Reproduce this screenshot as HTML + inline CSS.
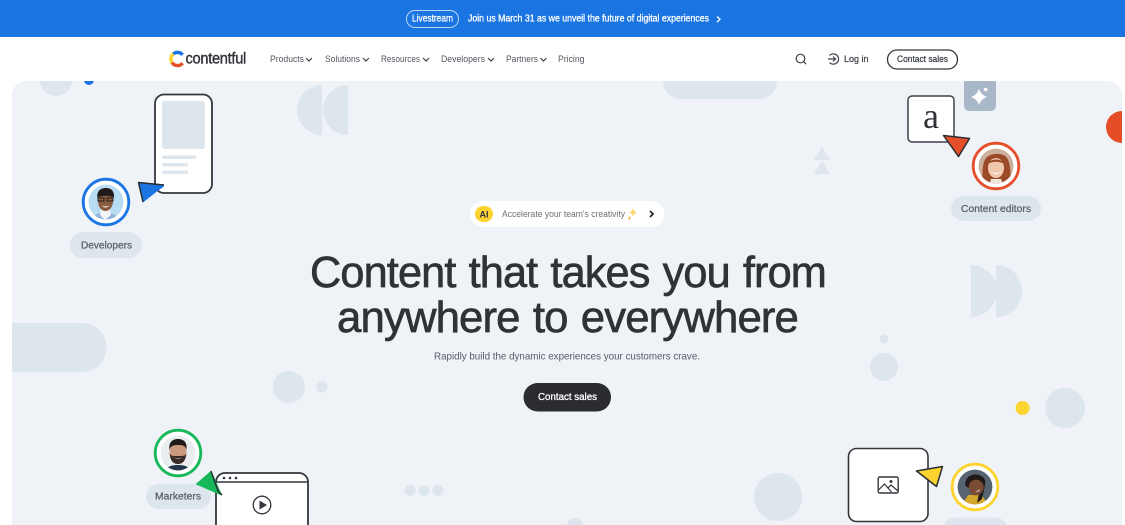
<!DOCTYPE html>
<html lang="en"><head><meta charset="utf-8"><title>Contentful</title>
<style>
html,body{margin:0;padding:0;background:#fff;width:1125px;height:525px;overflow:hidden}
svg{display:block}
text{font-family:"Liberation Sans",sans-serif}
.nav{font-size:9.2px;fill:#50555d}
.pill{font-size:9.8px;fill:#5b626b;stroke:#5b626b;stroke-width:.25px}
.h{font-size:44px;fill:#2f3237;stroke:#2f3237;stroke-width:.65px;letter-spacing:-.9px;word-spacing:2px}
.w{fill:#fff;stroke:#fff;stroke-width:.3px}
</style></head><body>
<svg width="1125" height="525" viewBox="0 0 1125 525" xmlns="http://www.w3.org/2000/svg">
<defs>
<clipPath id="panel"><path d="M12 525V95a14 14 0 0 1 14-14H1108a14 14 0 0 1 14 14V525Z"/></clipPath>
<clipPath id="a1"><circle cx="106" cy="202" r="17.5"/></clipPath>
<clipPath id="a2"><circle cx="996" cy="166" r="17.5"/></clipPath>
<clipPath id="a3"><circle cx="178" cy="453" r="17.5"/></clipPath>
<clipPath id="a4"><circle cx="975" cy="487" r="17.5"/></clipPath>
</defs>
<rect width="1125" height="37" fill="#1a74e2"/>
<rect x="406.500" y="10.500" width="52" height="17" rx="8.500" fill="none" stroke="#b9d5f6"/>
<text class="w" x="412" y="21.500" font-size="9.800" textLength="41" lengthAdjust="spacingAndGlyphs">Livestream</text>
<text class="w" x="468" y="21.500" font-size="9.800" textLength="241" lengthAdjust="spacingAndGlyphs">Join us March 31 as we unveil the future of digital experiences</text>
<path d="M717 16.500l3 2.800-3 2.800" fill="none" stroke="#fff" stroke-width="1.300"/>

<!-- nav -->
<g fill="none" stroke-width="3.400">
<path d="M182.600 54.800A6.600 6.600 0 0 0 173.300 53.900" stroke="#1a74e2"/>
<path d="M173.300 53.900A6.600 6.600 0 0 0 172 62.600" stroke="#fdd32f"/>
<path d="M172 62.600A6.600 6.600 0 0 0 182.600 63.200" stroke="#e5502a"/>
</g>
<text x="185.500" y="63.300" font-size="15.500" fill="#2f3237" stroke="#2f3237" stroke-width=".4" style="letter-spacing:-.3px" textLength="60.500" lengthAdjust="spacingAndGlyphs">contentful</text>
<text class="nav" x="270" y="62" textLength="34" lengthAdjust="spacingAndGlyphs">Products</text>
<text class="nav" x="325" y="62" textLength="35" lengthAdjust="spacingAndGlyphs">Solutions</text>
<text class="nav" x="381" y="62" textLength="39" lengthAdjust="spacingAndGlyphs">Resources</text>
<text class="nav" x="441" y="62" textLength="44" lengthAdjust="spacingAndGlyphs">Developers</text>
<text class="nav" x="506" y="62" textLength="32" lengthAdjust="spacingAndGlyphs">Partners</text>
<text class="nav" x="558" y="62" textLength="26.500" lengthAdjust="spacingAndGlyphs">Pricing</text>
<g fill="none" stroke="#3d4249" stroke-width="1.200">
<path d="M306 58l3 3 3-3M363 58l3 3 3-3M423 58l3 3 3-3M488 58l3 3 3-3M540.500 58l3 3 3-3"/>
<circle cx="800.500" cy="58.500" r="4.300"/><path d="M803.700 61.700l2.500 2.500"/>
<path d="M829.500 55.500A5.200 5.200 0 1 1 829.500 62.500M828 59h7.500M833 56.500l2.500 2.500-2.500 2.500"/>
</g>
<text x="844" y="62" font-size="9.200" fill="#41464d" stroke="#41464d" stroke-width=".25" textLength="24.500" lengthAdjust="spacingAndGlyphs">Log in</text>
<rect x="887.500" y="50" width="70" height="19" rx="9.500" fill="none" stroke="#33373d" stroke-width="1.300"/>
<text x="897" y="62" font-size="9.200" fill="#3b4047" stroke="#3b4047" stroke-width=".25" textLength="51" lengthAdjust="spacingAndGlyphs">Contact sales</text>

<!-- panel -->
<path d="M12 525V95a14 14 0 0 1 14-14H1108a14 14 0 0 1 14 14V525Z" fill="#eff2f7"/>
<g clip-path="url(#panel)" fill="#dde5ed">
<circle cx="56" cy="80" r="16"/>
<circle cx="89" cy="80" r="5" fill="#1a74e2"/>
<path d="M322 85a25 25 0 0 0 0 50ZM348 85a25 25 0 0 0 0 50Z"/>
<path d="M663 70H777V81a18 18 0 0 1-18 18H681a18 18 0 0 1-18-18Z"/>
<path d="M12 323H82a24.500 24.500 0 0 1 0 49H12Z"/>
<path d="M971 265a26 26 0 0 1 0 52ZM996 265a26 26 0 0 1 0 52Z"/>
<path d="M822 147l8 13h-16ZM822 161l8 13h-16Z"/>
<circle cx="289" cy="387" r="16"/><circle cx="322" cy="387" r="5.500"/>
<circle cx="884" cy="339" r="4.500"/><circle cx="884" cy="367" r="14"/>
<circle cx="1065" cy="408" r="20"/><circle cx="1022.500" cy="408" r="7" fill="#fdd32f"/>
<circle cx="778" cy="497" r="24"/>
<circle cx="410" cy="490.500" r="5.500"/><circle cx="424" cy="490.500" r="5.500"/><circle cx="438" cy="490.500" r="5.500"/>
<circle cx="575" cy="526" r="8"/>
<circle cx="1122" cy="127" r="16" fill="#e54d26"/>
</g>

<!-- developers -->
<rect x="155" y="94.500" width="57" height="98.500" rx="9" fill="#fff" stroke="#33373d" stroke-width="1.800"/>
<rect x="162" y="101" width="43" height="48" rx="3" fill="#dde5ed"/>
<rect x="162" y="155.500" width="34" height="3.500" rx="1.700" fill="#dde5ed"/>
<rect x="162" y="163" width="26" height="3.500" rx="1.700" fill="#dde5ed"/>
<rect x="162" y="170.500" width="26" height="3.500" rx="1.700" fill="#dde5ed"/>
<path d="M138 182L164.500 185.500L143 202.500Z" fill="#1a74e2"/>
<path d="M164 185L138.500 182.500L143 202" fill="none" stroke="#2a2e33" stroke-width="1.500" stroke-linejoin="round"/>
<path d="M142 185.500L164 186.500L146 199Z" fill="#1a74e2"/>
<circle cx="106" cy="202" r="22.800" fill="#fff" stroke="#1a74e2" stroke-width="2.800"/>
<g clip-path="url(#a1)">
<circle cx="106" cy="202" r="17.500" fill="#b9dcf5"/>
<path d="M90 222c2-8 9-9 15-9s14 2 17 9Z" fill="#8fb2d6"/>
<path d="M100 215l5 5 6-5-1-6h-9Z" fill="#f2f4f6"/>
<ellipse cx="105.500" cy="201" rx="7.500" ry="10" fill="#8a5a3f"/>
<path d="M97.500 198c-1-7 3-10 8.500-10s8.500 3 8 10c-2-3-14-3-16.500 0Z" fill="#1f1a19"/>
<path d="M98 198h6v3h-6ZM107 198h6v3h-6Z" fill="none" stroke="#1d1d1f" stroke-width=".9"/>
<path d="M101.500 205.500q4 2 8 0q-4 4-8 0Z" fill="#fff"/>
</g>
<rect x="70" y="232" width="72" height="26" rx="13" fill="#dde5ed"/>
<text class="pill" x="81" y="248.500" textLength="51" lengthAdjust="spacingAndGlyphs">Developers</text>

<!-- editors -->
<path d="M964 81H996V106a5 5 0 0 1-5 5H969a5 5 0 0 1-5-5Z" fill="#a9b8c9"/>
<path d="M979 89q2 6 8 8q-6 2-8 8q-2-6-8-8q6-2 8-8Z" fill="#fff"/>
<circle cx="985.700" cy="89.500" r="1.800" fill="#fff"/>
<rect x="908" y="96" width="46" height="46" rx="4" fill="#fff" stroke="#3d4249" stroke-width="1.500"/>
<text x="931" y="128" font-size="36" text-anchor="middle" fill="#2f3237" style="font-family:'Liberation Serif',serif">a</text>
<path d="M943.500 135.500L969.500 138.500L958.500 156.500Z" fill="#e5502a" stroke="#2a2e33" stroke-width="1.500" stroke-linejoin="round"/>
<path d="M947 137.500L966 139.500L958 152Z" fill="#e5502a"/>
<circle cx="996" cy="166" r="22.800" fill="#fff" stroke="#e5502a" stroke-width="2.800"/>
<g clip-path="url(#a2)">
<circle cx="996" cy="166" r="17.500" fill="#cdb09b"/>
<path d="M983 186c-1-10-1-23 3-28s17-6 21 0 4 19 3 28Z" fill="#9a4a26"/>
<path d="M989 186l2-7h10l3 7Z" fill="#f0e6dc"/>
<ellipse cx="996" cy="168" rx="8" ry="10" fill="#efc8ae"/>
<path d="M990.500 171q5.500 4 11 0q-5.500 6-11 0Z" fill="#fff"/>
<path d="M988 164c2-6 14-6 16 0-4-3-12-3-16 0Z" fill="#9a4a26"/>
</g>
<rect x="951" y="196" width="90" height="25" rx="12.500" fill="#dde5ed"/>
<text class="pill" x="961" y="212" textLength="70" lengthAdjust="spacingAndGlyphs">Content editors</text>

<!-- AI pill -->
<rect x="470" y="201" width="194.500" height="26" rx="13" fill="#fff"/>
<rect x="475" y="206" width="18" height="16" rx="8" fill="#fdd32f"/>
<text x="484" y="217.300" font-size="9" font-weight="bold" fill="#33373d" text-anchor="middle">AI</text>
<text x="502" y="217" font-size="9.400" fill="#6a7078" textLength="123" lengthAdjust="spacingAndGlyphs">Accelerate your team's creativity</text>
<path d="M633 208q.8 3.700 4 4.500q-3.200.8-4 4.500q-.8-3.700-4-4.500q3.200-.8 4-4.500Z" fill="#fcd874"/>
<path d="M629.500 216q.4 1.700 1.800 2.200q-1.400.5-1.800 2.200q-.4-1.700-1.800-2.200q1.400-.5 1.800-2.200Z" fill="#f7b955"/>
<path d="M650 211l3 3-3 3" fill="none" stroke="#1f2226" stroke-width="1.700"/>

<!-- heading -->
<text class="h" x="310" y="287" textLength="516" lengthAdjust="spacingAndGlyphs">Content that takes you from</text>
<text class="h" x="337" y="332" textLength="461" lengthAdjust="spacingAndGlyphs">anywhere to everywhere</text>
<text x="434" y="359.500" font-size="10.500" fill="#565c64" textLength="266" lengthAdjust="spacingAndGlyphs">Rapidly build the dynamic experiences your customers crave.</text>
<rect x="523.500" y="383" width="87.500" height="28.500" rx="14.200" fill="#2a2c31"/>
<text class="w" x="538" y="400" font-size="10" textLength="59" lengthAdjust="spacingAndGlyphs">Contact sales</text>

<!-- marketers -->
<circle cx="178" cy="453" r="22.800" fill="#fff" stroke="#17b85a" stroke-width="2.800"/>
<g clip-path="url(#a3)">
<circle cx="178" cy="453" r="17.500" fill="#e9edf0"/>
<path d="M165 471c2-5 8-6 13-6s11 1 13 6Z" fill="#22324a"/>
<ellipse cx="178" cy="452" rx="8.500" ry="11" fill="#c99a7e"/>
<path d="M169.500 450c-1-8 3-11 8.500-11s9.500 3 8.500 11c-1-4-3-5-8.500-5s-7.500 1-8.500 5Z" fill="#1e1b1a"/>
<path d="M169.500 453c1 9 4.500 11 8.500 11s7.500-2 8.500-11c-1 3-3 3-8.500 3s-7.500 0-8.500-3Z" fill="#3a2a24"/>
<path d="M174 457.500q4 2 8 0q-4 3-8 0Z" fill="#fff"/>
</g>
<rect x="146" y="484" width="65" height="25" rx="12.500" fill="#dde5ed"/>
<text class="pill" x="155" y="499.500" textLength="46" lengthAdjust="spacingAndGlyphs">Marketers</text>
<path d="M216 530V482a9 9 0 0 1 9-9H299a9 9 0 0 1 9 9V530Z" fill="#fff" stroke="#33373d" stroke-width="1.800"/>
<path d="M216 482H308" stroke="#33373d" stroke-width="1.500"/>
<circle cx="224" cy="478" r="1.300" fill="#33373d"/><circle cx="230" cy="478" r="1.300" fill="#33373d"/><circle cx="236" cy="478" r="1.300" fill="#33373d"/>
<circle cx="262" cy="505" r="8.800" fill="none" stroke="#33373d" stroke-width="1.300"/>
<path d="M259.500 500.500L267 505L259.500 509.500Z" fill="#33373d"/>
<path d="M221.500 495L196.500 484L211 471.500Z" fill="#17b85a" stroke="#17b85a" stroke-linejoin="round"/>
<path d="M211 471L218 491L222 495" fill="none" stroke="#2a2e33" stroke-width="1.500"/>

<!-- image -->
<rect x="848.500" y="448.500" width="79.500" height="73" rx="8" fill="#fff" stroke="#33373d" stroke-width="1.600"/>
<rect x="878.200" y="477" width="20" height="16" rx="1.500" fill="none" stroke="#33373d" stroke-width="1.400"/>
<path d="M878.500 490l6-6 7 8M888 488l3-3 7 6" fill="none" stroke="#33373d" stroke-width="1.200"/>
<circle cx="891" cy="481.500" r="1.500" fill="#33373d"/>
<path d="M942.500 466.500L916.500 471L936.500 486.500Z" fill="#fdd32f" stroke="#2a2e33" stroke-width="1.500" stroke-linejoin="round"/>
<path d="M940 468.500L921 471.500L935.500 482.500Z" fill="#fdd32f"/>
<circle cx="975" cy="487" r="22.800" fill="#fff" stroke="#fdd32f" stroke-width="2.800"/>
<g clip-path="url(#a4)">
<circle cx="975" cy="487" r="17.500" fill="#566371"/>
<path d="M962 505l6-10h14l6 10Z" fill="#d4a72e"/>
<path d="M965 484c1-8 8-11 14-9s7 6 6 10l-3 14-5 4 3-14-7-2c-4 1-7 1-8-3Z" fill="#231b1a"/>
<path d="M969 486c0-5 6-8 11-5s4 8 2 11-6 4-9 3-4-5-4-9Z" fill="#7a4c35"/>
<path d="M975 491q3 .5 5-2q-1 4-5 2Z" fill="#fff"/>
</g>
<rect x="943" y="517.500" width="65" height="25" rx="12.500" fill="#dde5ed"/>
</svg>
</body></html>
